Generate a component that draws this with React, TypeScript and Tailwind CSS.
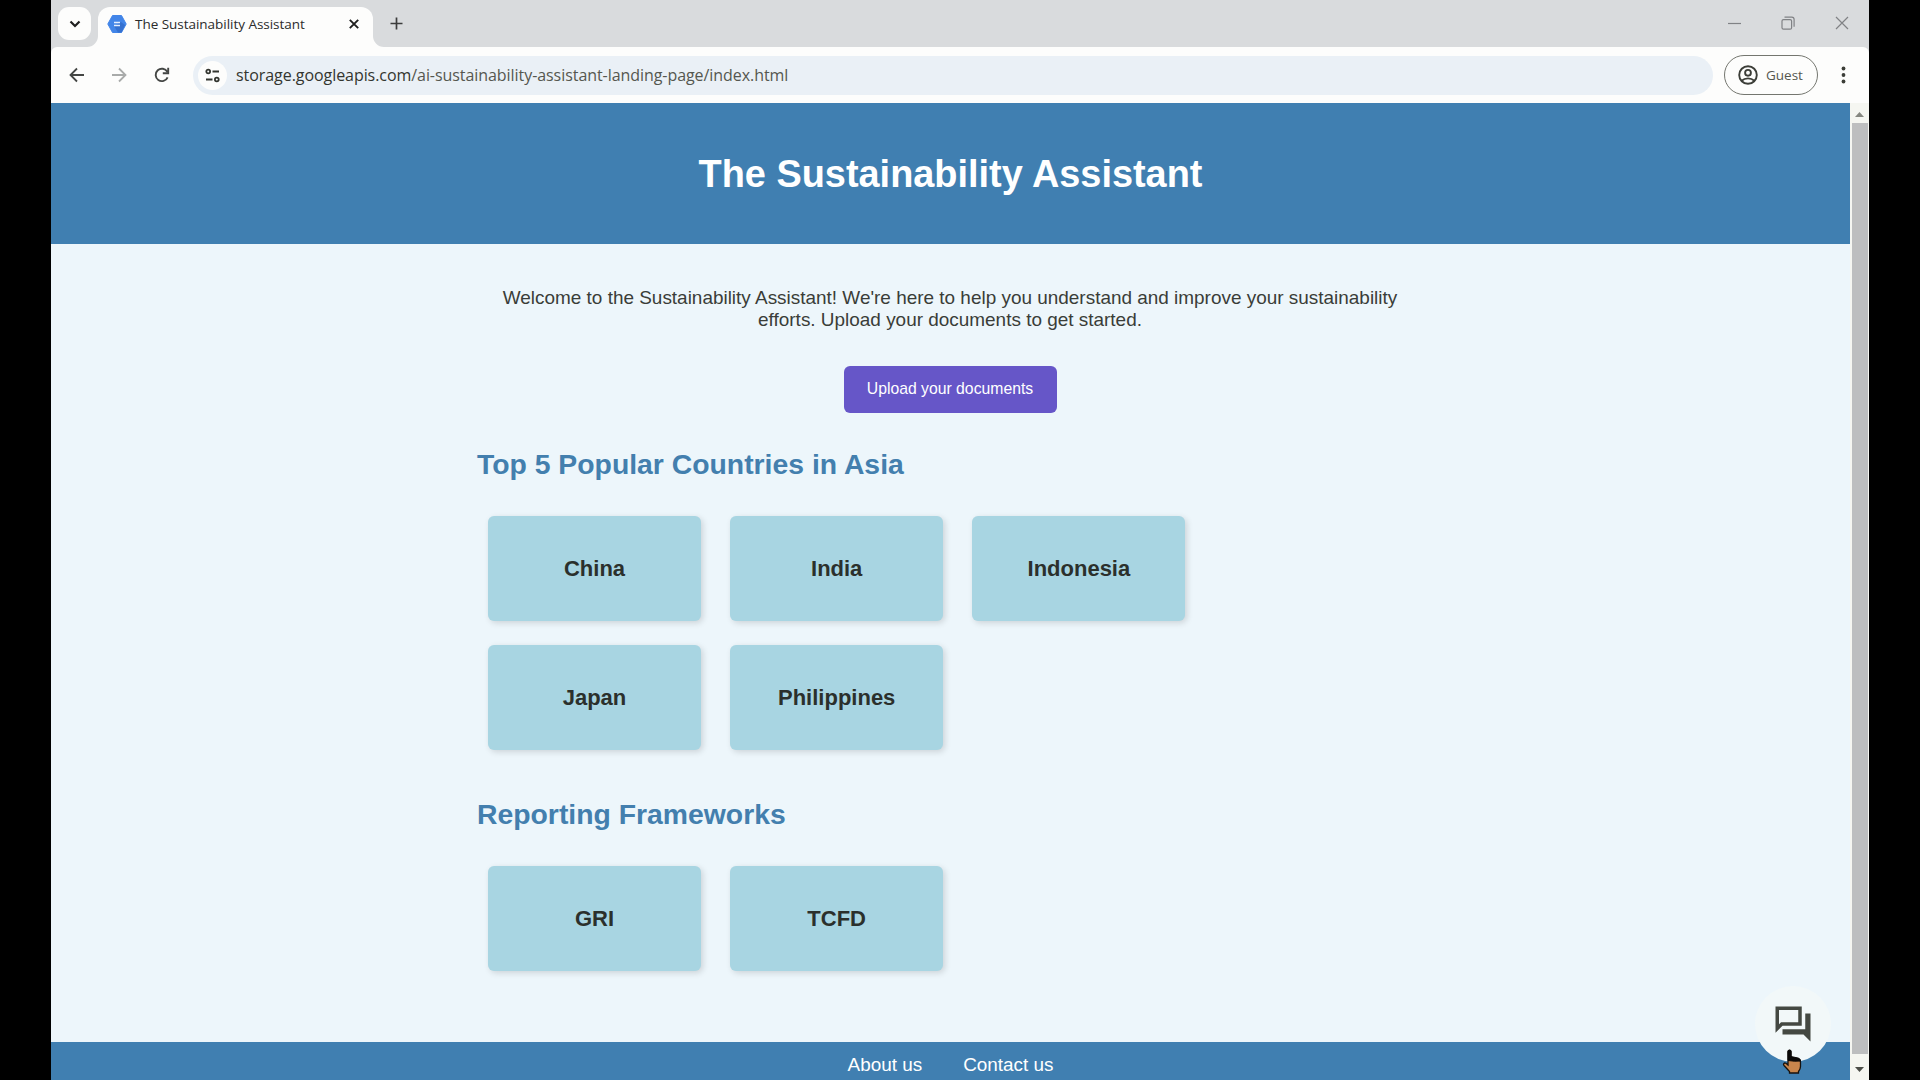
import React from "react";

const COUNTRIES = ["China", "India", "Indonesia", "Japan", "Philippines"];
const FRAMEWORKS = ["GRI", "TCFD"];

function TabStrip() {
  return (
    <div className="flex h-[47px] shrink-0 items-start bg-[#d9dbdd] pl-[7px]">
      <div className="mt-[7px] flex h-[33px] w-[33px] items-center justify-center rounded-[11px] bg-[#fdfdfc]">
        <svg className="mt-px h-[8px] w-[12px]" viewBox="0 0 12 8" fill="none" stroke="#1f1f1f" strokeWidth="2.2">
          <path d="M1.5 1.5 6 6l4.500-4.500" />
        </svg>
      </div>
      <div className="mt-[7px] flex">
        <svg className="mt-[29px] -ml-[4px] h-[11px] w-[11px]" viewBox="0 0 11 11" fill="#fdfdfc">
          <path d="M11 0v11H0A11 11 0 0 0 11 0z" />
        </svg>
        <div className="flex h-[40px] w-[275px] items-center rounded-t-[12px] bg-[#fdfdfc] pr-[14px] pb-[7px] pl-[9px]">
          <svg className="mt-px h-[18px] w-[20px] shrink-0" viewBox="0 0 20 18">
            <path d="M5.500 .5h9L19.200 9l-4.700 8.500h-9L.8 9z" fill="#4285e8" stroke="#4285e8" strokeLinejoin="round" />
            <path d="M14 7l4 3-3.500 7.500H11L7 11z" fill="#3571d0" />
            <path d="M7 7.500h6M7 10.500h6" stroke="#e4eeff" strokeWidth="1.400" />
          </svg>
          <span className="ml-[8px] font-['Open_Sans',sans-serif] text-[13.500px] leading-[20px] tracking-[-0.030px] whitespace-nowrap text-[#2b2b2b]">
            The Sustainability Assistant
          </span>
          <svg className="ml-auto h-[10px] w-[10px]" viewBox="0 0 10 10" stroke="#1f1f1f" strokeWidth="1.900">
            <path d="M.8.8l8.400 8.400M9.200.8.8 9.200" />
          </svg>
        </div>
        <svg className="mt-[29px] h-[11px] w-[11px]" viewBox="0 0 11 11" fill="#fdfdfc">
          <path d="M0 0v11h11A11 11 0 0 1 0 0z" />
        </svg>
      </div>
      <svg className="mt-[17px] ml-[6px] h-[13px] w-[13px]" viewBox="0 0 13 13" stroke="#3c3c3c" strokeWidth="1.700">
        <path d="M6.500.5v12M.5 6.500h12" />
      </svg>
      <div className="mt-[16px] mr-[20px] ml-auto flex items-center gap-[40px] text-[#808285]">
        <svg className="h-[14px] w-[13px]" viewBox="0 0 13 14" stroke="currentColor" strokeWidth="1.200">
          <path d="M0 7.500h13" />
        </svg>
        <svg className="h-[14px] w-[14px]" viewBox="0 0 14 14" fill="none" stroke="currentColor" strokeWidth="1.200">
          <rect x="1" y="3.600" width="9.600" height="9.600" rx="1.500" />
          <path d="M3.500 1.200h7.300a2.300 2.300 0 0 1 2.300 2.300v7.300" />
        </svg>
        <svg className="h-[14px] w-[14px]" viewBox="0 0 14 14" stroke="currentColor" strokeWidth="1.200">
          <path d="M1 1l12 12M13 1 1 13" />
        </svg>
      </div>
    </div>
  );
}

function Toolbar() {
  return (
    <div className="flex h-[56px] shrink-0 items-center rounded-t-[6px] bg-[#fdfdfc] pr-[23px] pl-[18px]">
      <svg className="h-[16px] w-[16px]" viewBox="0 0 16 16" fill="none" stroke="#444644" strokeWidth="1.800">
        <path d="M15 8H2M8 1.500 1.500 8 8 14.500" />
      </svg>
      <svg className="ml-[26px] h-[16px] w-[16px]" viewBox="0 0 16 16" fill="none" stroke="#a9abaa" strokeWidth="1.800">
        <path d="M1 8h13M8 1.500 14.500 8 8 14.500" />
      </svg>
      <svg className="ml-[27px] h-[16px] w-[16px]" viewBox="0 0 16 16" fill="none" stroke="#444644" strokeWidth="1.900">
        <path d="M13.600 10.300A6.200 6.200 0 1 1 13.300 4.900M14.200 .8v5.400H8.800" />
      </svg>
      <div className="ml-[23px] flex h-[39px] w-[1520px] items-center rounded-full bg-[#eaf0f6] pl-[5px]">
        <div className="flex h-[29px] w-[29px] items-center justify-center rounded-full bg-[#fdfdfc]">
          <svg className="h-[15px] w-[15px]" viewBox="0 0 15 15" fill="none" stroke="#33352f" strokeWidth="1.800">
            <circle cx="3.200" cy="3.500" r="1.900" />
            <path d="M7.500 3.500H14M1 11.500h6.500" />
            <circle cx="11.800" cy="11.500" r="1.900" />
          </svg>
        </div>
        <span className="ml-[9px] font-['Open_Sans',sans-serif] text-[16px] leading-[22px] tracking-[-0.060px] whitespace-nowrap text-[#55574f]">
          <span className="text-[#33352f]">storage.googleapis.com</span>/ai-sustainability-assistant-landing-page/index.html
        </span>
      </div>
      <div className="ml-[11px] flex h-[40px] w-[94px] items-center rounded-full border border-[#74766f] pl-[13px]">
        <svg className="h-[20px] w-[20px]" viewBox="0 0 20 20" fill="none" stroke="#3c3e38" strokeWidth="1.900">
          <circle cx="10" cy="10" r="8.800" />
          <circle cx="10" cy="7.800" r="2.900" />
          <path d="M3.600 15.800c3.600-3.200 9.200-3.200 12.800 0" />
        </svg>
        <span className="ml-[8px] font-['Open_Sans',sans-serif] text-[13.500px] leading-[20px] text-[#55574f]">Guest</span>
      </div>
      <svg className="ml-auto h-[18px] w-[5px]" viewBox="0 0 5 18" fill="#3c3e38">
        <circle cx="2.500" cy="2.500" r="1.900" />
        <circle cx="2.500" cy="9" r="1.900" />
        <circle cx="2.500" cy="15.500" r="1.900" />
      </svg>
    </div>
  );
}

function CardGrid({ items }: { items: string[] }) {
  return (
    <div className="ml-[11px] grid grid-cols-[repeat(3,213px)] gap-x-[29.200px] gap-y-[24px]">
      {items.map((name) => (
        <div
          key={name}
          className="flex h-[105px] items-center justify-center rounded-[6px] bg-[#a8d5e2] pb-px text-[22px] font-bold text-[#2b302c] shadow-[2px_2px_6px_rgba(0,0,0,0.14)]"
        >
          {name}
        </div>
      ))}
    </div>
  );
}

function Page() {
  return (
    <div className="flex w-[1799px] flex-col overflow-hidden bg-[#edf6fb] font-['Liberation_Sans',Arial,sans-serif]">
      <header className="flex h-[141px] shrink-0 items-center justify-center bg-[#407fb1]">
        <h1 className="text-[37.900px] leading-[44px] font-bold text-white">The Sustainability Assistant</h1>
      </header>
      <main className="flex h-[798px] shrink-0 flex-col pl-[426px]">
        <div className="mt-[43px] w-[946px] text-center text-[18.950px] leading-[22px] text-[#3a3d38]">
          <p>
            Welcome to the Sustainability Assistant! We're here to help you understand and improve your sustainability
            <br />
            efforts. Upload your documents to get started.
          </p>
          <button className="mt-[35px] h-[47px] w-[213px] rounded-[6px] bg-[#6656c8] pb-px text-[15.750px] leading-[20px] text-white">
            Upload your documents
          </button>
        </div>
        <h2 className="mt-[35px] mb-[36px] text-[28.350px] leading-[32px] font-bold text-[#437fae]">
          Top 5 Popular Countries in Asia
        </h2>
        <CardGrid items={COUNTRIES} />
        <h2 className="mt-[48px] mb-[36px] text-[28.350px] leading-[32px] font-bold text-[#437fae]">
          Reporting Frameworks
        </h2>
        <CardGrid items={FRAMEWORKS} />
      </main>
      <footer className="flex h-[38px] shrink-0 items-start justify-center gap-[41px] bg-[#407fb1] pt-[12px] text-[18.900px] leading-[22px] text-white">
        <a>About us</a>
        <a>Contact us</a>
      </footer>
    </div>
  );
}

function Scrollbar() {
  return (
    <div className="flex w-[19px] flex-col items-center bg-[#f5f6f1]">
      <svg className="mt-[9px] h-[5px] w-[9px]" viewBox="0 0 9 5" fill="#858780">
        <path d="M0 5 4.500 0 9 5z" />
      </svg>
      <div className="mt-[6px] h-[931px] w-[16px] bg-[#bdbebf]" />
      <svg className="mt-[13px] h-[5px] w-[9px]" viewBox="0 0 9 5" fill="#4c4e48">
        <path d="M0 0h9L4.500 5z" />
      </svg>
    </div>
  );
}

function ChatButton() {
  return (
    <div className="absolute top-[986px] left-[1755px] flex h-[76px] w-[76px] items-center justify-center rounded-full bg-[#f2f8f9]">
      <svg className="h-[42px] w-[42px]" viewBox="0 0 24 24" fill="#444842">
        <path d="M15 4v7H5.170L4 12.170V4h11m2-2H2v15l4-4h11V2zm5 4h-3v9H6v3h12l4 4V6z" />
      </svg>
    </div>
  );
}

function HandCursor() {
  return (
    <svg className="absolute top-[1049px] left-[1782px] h-[26px] w-[20px]" viewBox="0 0 20 26">
      <path
        d="M6 2.500C6 .8 9 .8 9 2.500V8.500l7 1.500c1.600.4 2.500 1.300 2.500 3v4.500c0 2-.8 3.500-2 5v1.500H7.500v-1.500L2 16.500c-1.300-1.500.2-3.200 2-2.200L6 16z"
        fill="#c8854c"
        stroke="#17120e"
        strokeWidth="1.300"
      />
      <path d="M6 2.500C6 .8 9 .8 9 2.500V7.500l7 1.500c1.600.4 2.300 1.300 2.500 3l-6 .2L6 11.500z" fill="#0b0908" stroke="#0b0908" />
    </svg>
  );
}

export default function App() {
  return (
    <div className="relative flex h-[1080px] w-[1920px] justify-center overflow-hidden bg-black">
      <div className="flex w-[1818px] flex-col bg-[#d9dbdd]">
        <TabStrip />
        <Toolbar />
        <div className="flex h-[977px]">
          <Page />
          <Scrollbar />
        </div>
      </div>
      <ChatButton />
      <HandCursor />
    </div>
  );
}
